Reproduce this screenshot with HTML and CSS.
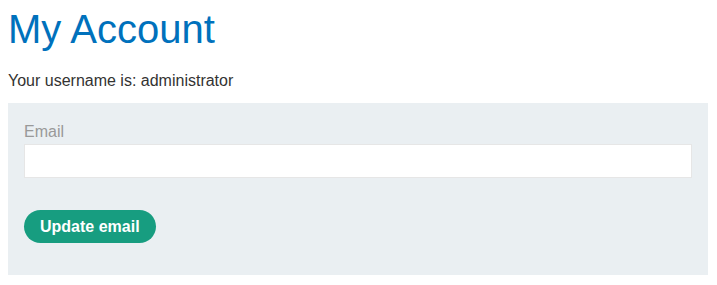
FILE: index.html
```html
<!DOCTYPE html>
<html>
<head>
<meta charset="utf-8">
<link rel="stylesheet" href="styles.css">
</head>
<body>
<div class="page">
  <h1 class="title">My Account</h1>
  <p class="username">Your username is: administrator</p>
  <form class="email-form">
    <label class="field-label">Email</label>
    <input class="field-input" type="email" name="email">
    <button class="btn" type="button">Update email</button>
  </form>
</div>
</body>
</html>
```
FILE: styles.css
```css
html, body {
  margin: 0;
  padding: 0;
  background: #ffffff;
}
body {
  font-family: "Liberation Sans", Arial, sans-serif;
  color: #333332;
}
.page {
  padding: 6px 9px 0 8px;
  display: flex;
  flex-direction: column;
}
.title {
  margin: 0;
  font-size: 40px;
  line-height: 46px;
  font-weight: normal;
  color: #0071bc;
}
.username {
  margin: 20px 0 13px;
  font-size: 16px;
  line-height: 18px;
}
.email-form {
  background: #eaeff2;
  padding: 20px 16px 32px;
  display: flex;
  flex-direction: column;
  align-items: flex-start;
}
.field-label {
  font-size: 16px;
  line-height: 18px;
  color: #999999;
  margin-bottom: 3px;
}
.field-input {
  box-sizing: border-box;
  width: 100%;
  height: 34px;
  margin: 0;
  border: 1px solid #e6e6e6;
  background: #ffffff;
  font-size: 16px;
  outline: none;
}
.btn {
  margin-top: 32px;
  height: 33px;
  padding: 0 16px;
  border: none;
  border-radius: 17px;
  background: #179d80;
  color: #ffffff;
  font-family: "Liberation Sans", Arial, sans-serif;
  font-weight: bold;
  font-size: 16px;
  line-height: 19px;
  cursor: pointer;
}
```
